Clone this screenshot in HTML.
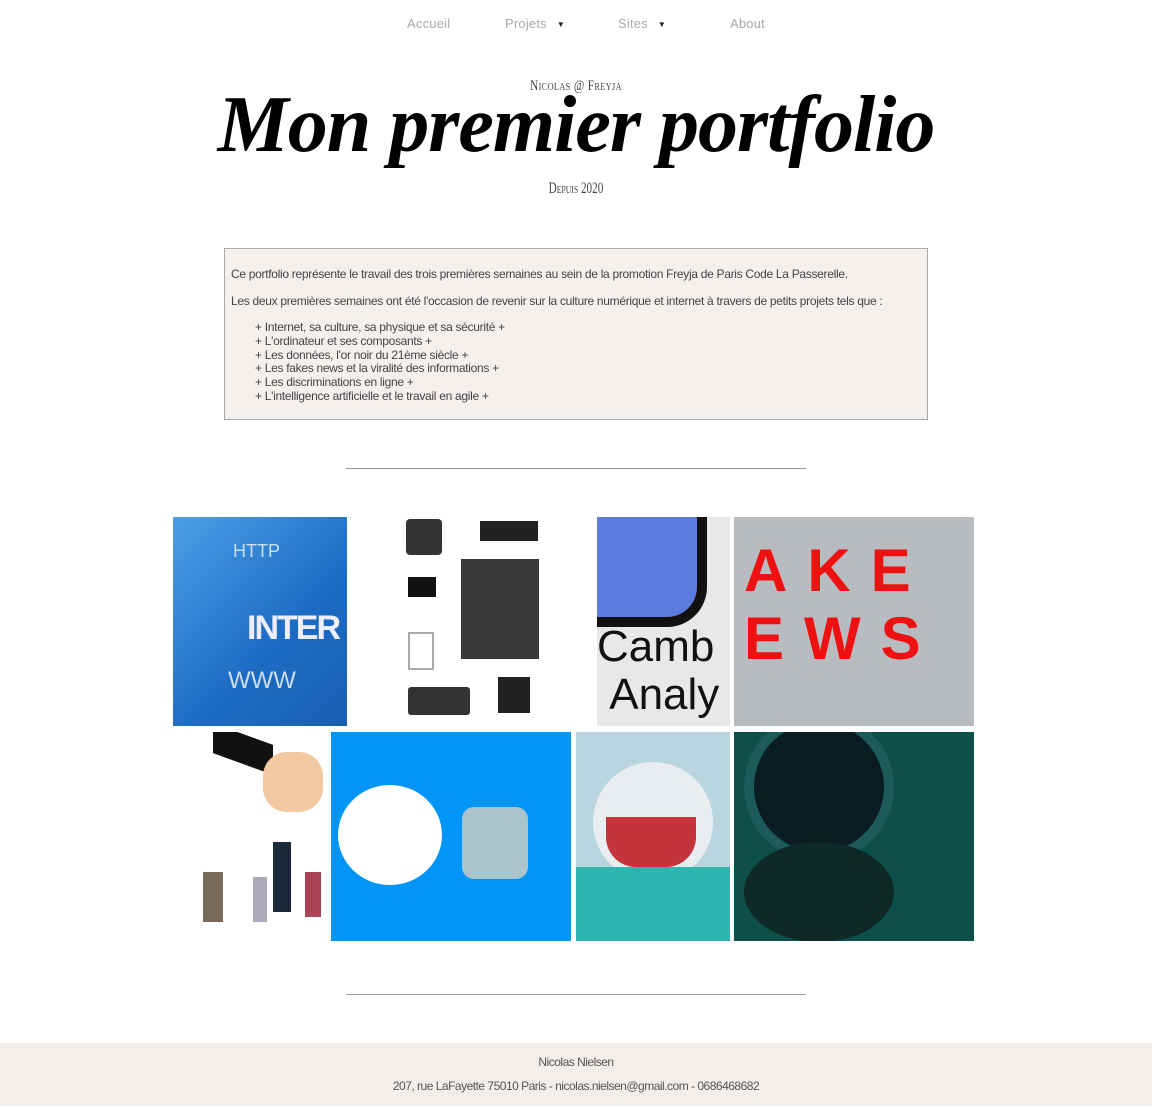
<!DOCTYPE html>
<html><head><meta charset="utf-8"><style>
*{margin:0;padding:0;box-sizing:border-box}
body{width:1152px;height:1106px;background:#fff;position:relative;font-family:"Liberation Sans",sans-serif;overflow:hidden}
.a{position:absolute}
.nav{top:16px;font-size:13px;color:#aaa;letter-spacing:0.2px}
.tri{font-size:8px;color:#222;margin-left:10px;vertical-align:1px}
.box{left:224px;top:248px;width:704px;height:172px;border:1px solid #aaa;background:#f5f0ee;color:#444;font-size:12px;letter-spacing:-0.3px;padding:18px 6px}
.box p{margin-bottom:12px;line-height:15px}
.box ul{list-style:none;padding-left:24px;line-height:13.8px}
hr{position:absolute;left:346px;width:460px;border:0;border-top:1px solid #999}
.img{position:absolute;overflow:hidden}
</style></head><body>
<div class="a nav" style="left:407px">Accueil</div>
<div class="a nav" style="left:505px">Projets<span class="tri">▼</span></div>
<div class="a nav" style="left:618px">Sites<span class="tri">▼</span></div>
<div class="a nav" style="left:730px">About</div>

<div class="a" style="left:0;width:1152px;top:78px;text-align:center;font-family:'Liberation Serif',serif;font-size:15px;color:#444;font-variant:small-caps;letter-spacing:0.5px;transform:scaleX(0.75)">Nicolas @ Freyja</div>
<div class="a" style="left:0;width:1152px;top:80px;text-align:center;font-family:'Liberation Serif',serif;font-style:italic;font-weight:bold;font-size:80px;color:#000;letter-spacing:-1px">Mon premier portfolio</div>
<div class="a" style="left:0;width:1152px;top:180px;text-align:center;font-family:'Liberation Serif',serif;font-size:16px;color:#444;font-variant:small-caps;transform:scaleX(0.7)">Depuis 2020</div>

<div class="a box">
<p>Ce portfolio représente le travail des trois premières semaines au sein de la promotion Freyja de Paris Code La Passerelle.</p>
<p>Les deux premières semaines ont été l'occasion de revenir sur la culture numérique et internet à travers de petits projets tels que :</p>
<ul>
<li>+ Internet, sa culture, sa physique et sa sécurité +</li>
<li>+ L'ordinateur et ses composants +</li>
<li>+ Les données, l'or noir du 21ème siècle +</li>
<li>+ Les fakes news et la viralité des informations +</li>
<li>+ Les discriminations en ligne +</li>
<li>+ L'intelligence artificielle et le travail en agile +</li>
</ul></div>

<hr style="top:468px">

<div class="img" style="left:173px;top:517px;width:174px;height:209px;background:linear-gradient(135deg,#4aa0e6,#1c6cc4 60%,#1a5fb0)">
<div class="a" style="left:74px;top:92px;color:#eef;font-size:34px;font-weight:bold;letter-spacing:-2px">INTER</div>
<div class="a" style="left:60px;top:24px;color:#cde;font-size:18px">HTTP</div>
<div class="a" style="left:55px;top:150px;color:#cde;font-size:24px">WWW</div></div>
<div class="img" style="left:352px;top:517px;width:240px;height:209px;background:#fff">
<div class="a" style="left:54px;top:2px;width:36px;height:36px;background:#333;border-radius:4px"></div>
<div class="a" style="left:128px;top:4px;width:58px;height:20px;background:#222"></div>
<div class="a" style="left:109px;top:42px;width:78px;height:100px;background:#3a3a3a"></div>
<div class="a" style="left:56px;top:60px;width:28px;height:20px;background:#111"></div>
<div class="a" style="left:56px;top:115px;width:26px;height:38px;border:2px solid #aaa"></div>
<div class="a" style="left:56px;top:170px;width:62px;height:28px;background:#333;border-radius:3px"></div>
<div class="a" style="left:146px;top:160px;width:32px;height:36px;background:#222"></div></div>
<div class="img" style="left:597px;top:517px;width:133px;height:209px;background:#e8e8e8">
<div class="a" style="left:-20px;top:-10px;width:130px;height:120px;background:#111;border-radius:0 0 40px 0"></div>
<div class="a" style="left:0;top:0;width:100px;height:100px;background:#5c7be0;border-radius:0 0 30px 0"></div>
<div class="a" style="left:0;top:106px;font-size:44px;color:#111;line-height:48px;white-space:nowrap">Camb<br>&nbsp;Analy</div></div>
<div class="img" style="left:734px;top:517px;width:240px;height:209px;background:#b8bcc0">
<div class="a" style="left:10px;top:20px;font-size:60px;color:#e11;font-weight:bold;line-height:68px;white-space:nowrap;letter-spacing:20px">AKE<br>EWS</div></div>

<div class="img" style="left:173px;top:732px;width:154px;height:209px;background:#fff">
<div class="a" style="left:40px;top:2px;width:60px;height:30px;background:#111;transform:skewY(20deg)"></div>
<div class="a" style="left:90px;top:20px;width:60px;height:60px;background:#f2c9a0;border-radius:40%"></div>
<div class="a" style="left:100px;top:110px;width:18px;height:70px;background:#1b2a3a"></div>
<div class="a" style="left:30px;top:140px;width:20px;height:50px;background:#7a6a5a"></div>
<div class="a" style="left:80px;top:145px;width:14px;height:45px;background:#aab"></div>
<div class="a" style="left:132px;top:140px;width:16px;height:45px;background:#a45"></div></div>
<div class="img" style="left:331px;top:732px;width:240px;height:209px;background:#0095f6">
<div class="a" style="left:7px;top:53px;width:104px;height:100px;background:#fff;border-radius:50%"></div>
<div class="a" style="left:131px;top:75px;width:66px;height:72px;background:#aac4cc;border-radius:12px"></div></div>
<div class="img" style="left:576px;top:732px;width:154px;height:209px;background:#b9d5df">
<div class="a" style="left:17px;top:30px;width:120px;height:120px;background:#e8eef0;border-radius:50%"></div>
<div class="a" style="left:30px;top:85px;width:90px;height:50px;background:#c3343c;border-radius:0 0 30px 30px"></div>
<div class="a" style="left:0;top:135px;width:154px;height:74px;background:#2db5b0"></div></div>
<div class="img" style="left:734px;top:732px;width:240px;height:209px;background:#0e4f4a">
<div class="a" style="left:10px;top:-20px;width:150px;height:150px;background:#0a1d22;border-radius:50%;border:10px solid #1d5a5a"></div>
<div class="a" style="left:10px;top:110px;width:150px;height:100px;background:#0d2a26;border-radius:50%"></div></div>

<hr style="top:994px">

<div class="a" style="left:0;top:1043px;width:1152px;height:63px;background:#f4eeeb;text-align:center;color:#555;font-size:12px;letter-spacing:-0.5px">
<div style="margin-top:12px">Nicolas Nielsen</div>
<div style="margin-top:10px">207, rue LaFayette 75010 Paris - nicolas.nielsen@gmail.com - 0686468682</div></div>
</body></html>
